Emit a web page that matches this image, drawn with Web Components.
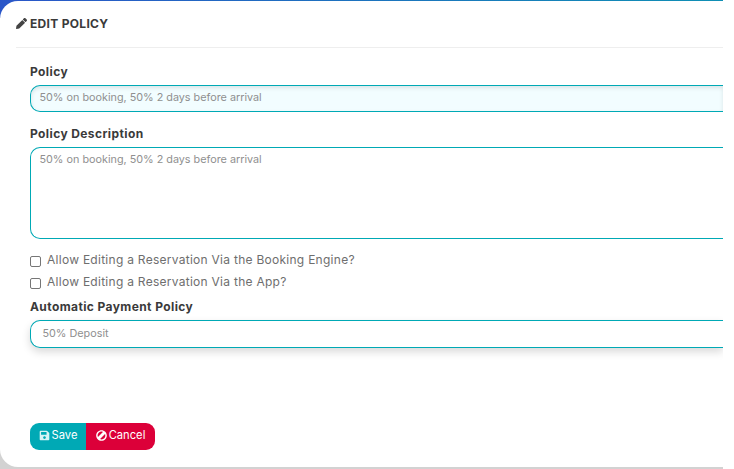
<!DOCTYPE html>
<html>
<head>
<meta charset="utf-8">
<title>Edit Policy</title>
<style>
    html, body { margin: 0; padding: 0; background: #fff; }
    body { font-family: "Inter", "Open Sans", sans-serif; width: 734px; height: 469px; overflow: hidden; }
</style>
</head>
<body>
<policy-card>
    <policy-field label="Policy" value="50% on booking, 50% 2 days before arrival" variant="tinted"></policy-field>
    <policy-field label="Policy Description" value="50% on booking, 50% 2 days before arrival" variant="area"></policy-field>
    <policy-check>Allow Editing a Reservation Via the Booking Engine?</policy-check>
    <policy-check>Allow Editing a Reservation Via the App?</policy-check>
    <policy-field label="Automatic Payment Policy" value="50% Deposit" variant="select"></policy-field>
    <policy-actions slot="actions"></policy-actions>
</policy-card>

<script>
(function() {
    class PolicyCard extends HTMLElement {
        constructor() {
            super();
            this.attachShadow({ mode: 'open' }).innerHTML = `
                <style>
                    :host {
                        display: block;
                        box-sizing: border-box;
                        width: 723px;
                        height: 469px;
                        padding: 1px 0 2px;
                        overflow: hidden;
                        background:
                            linear-gradient(#d2d2d2, #d2d2d2) bottom / 100% 20px no-repeat,
                            linear-gradient(90deg, #2a56c8, #0f8fb4) top / 100% 18px no-repeat;
                    }
                    .sheet {
                        height: 100%;
                        background: #fff;
                        border-radius: 18px 0 0 18px;
                    }
                    .head {
                        margin-left: 16px;
                        height: 47px;
                        box-sizing: border-box;
                        border-bottom: 1px solid #eee;
                        display: flex;
                        align-items: center;
                        gap: 3px;
                        padding-bottom: 1px;
                        font-size: 12px;
                        font-weight: 700;
                        color: #3a3a3a;
                        letter-spacing: 0.3px;
                    }
                    .head svg { width: 11px; height: 11px; fill: #444; }
                    .body { padding: 16px 0 0 30px; display: flex; flex-direction: column; }
                </style>
                <div class="sheet">
                    <div class="head">
                        <svg viewBox="0 0 512 512"><path d="M497.900 142.100l-46.100 46.100c-4.700 4.700-12.300 4.700-17 0l-111-111c-4.700-4.700-4.700-12.300 0-17l46.100-46.100c18.700-18.700 49.100-18.700 67.900 0l60.100 60.100c18.800 18.700 18.800 49.100 0 67.900zM284.200 99.800L21.600 362.400.4 483.900c-2.900 16.400 11.400 30.600 27.800 27.800l121.500-21.300 262.600-262.600c4.700-4.700 4.700-12.300 0-17l-111-111c-4.800-4.700-12.400-4.700-17.100 0z"/></svg>
                        <span>EDIT POLICY</span>
                    </div>
                    <div class="body"><slot></slot></div>
                    <slot name="actions"></slot>
                </div>
            `;
        }
    }

    class PolicyField extends HTMLElement {
        constructor() {
            super();
            this.attachShadow({ mode: 'open' });
        }

        connectedCallback() {
            const variant = this.getAttribute('variant');
            this.shadowRoot.innerHTML = `
                <style>
                    :host { display: block; margin-bottom: 14px; }
                    :host([variant="area"]) { margin-bottom: 10px; }
                    label {
                        display: block;
                        font-size: 12px;
                        font-weight: 700;
                        color: #3a3a3a;
                        line-height: 16px;
                        margin-bottom: 5px;
                        letter-spacing: 0.4px;
                    }
                    .box {
                        box-sizing: border-box;
                        height: 27px;
                        border: 1.5px solid #00a9b5;
                        border-right: 0;
                        border-radius: 10px 0 0 10px;
                        padding: 4px 8.5px;
                        font-size: 10.8px;
                        line-height: 15px;
                        color: #8f8f8f;
                        background: #fff;
                    }
                    .tinted { background: #f2fdff; box-shadow: inset 0 2px 4px rgba(0,0,0,0.1); }
                    .area { height: 92px; }
                    .select { padding-left: 11.5px; height: 28px; padding-top: 5px; box-shadow: 0 4px 8px rgba(0,0,0,0.15); }
                </style>
                <label>${this.getAttribute('label')}</label>
                <div class="box ${variant}">${this.getAttribute('value')}</div>
            `;
        }
    }

    class PolicyCheck extends HTMLElement {
        constructor() {
            super();
            this.attachShadow({ mode: 'open' }).innerHTML = `
                <style>
                    :host {
                        display: flex;
                        align-items: center;
                        gap: 6px;
                        height: 22px;
                        font-size: 12px;
                        color: #6e6e6e;
                        letter-spacing: 0.27px;
                    }
                    span { padding-bottom: 2px; }
                    i {
                        box-sizing: border-box;
                        width: 11px;
                        height: 11px;
                        border: 1px solid #767676;
                        border-radius: 2px;
                        background: #fff;
                        margin-top: 3px;
                    }
                    :host(:last-of-type) { margin-bottom: 6px; }
                </style>
                <i></i><span><slot></slot></span>
            `;
        }
    }

    class PolicyActions extends HTMLElement {
        constructor() {
            super();
            this.attachShadow({ mode: 'open' }).innerHTML = `
                <style>
                    :host { display: flex; margin: 61px 0 0 30px; width: max-content; }
                    div {
                        display: flex;
                        align-items: center;
                        justify-content: center;
                        gap: 2px;
                        height: 27px;
                        font-size: 11.2px;
                        color: #fff;
                    }
                    span { padding-bottom: 3px; }
                    svg { width: 11px; height: 11px; fill: #fff; margin-bottom: 2px; }
                    .save { width: 56px; background: #00a9b5; border-radius: 9px 0 0 9px; }
                    .save svg { fill: #d8f3f5; }
                    .cancel { width: 69px; background: #dc0039; border-radius: 0 9px 9px 0; }
                    .cancel svg { transform: scaleX(-1); }
                </style>
                <div class="save">
                    <svg viewBox="0 0 448 512"><path fill-rule="evenodd" d="M433.900 129.900l-83.900-83.900A48 48 0 0 0 316.100 32H48C21.500 32 0 53.500 0 80v352c0 26.500 21.500 48 48 48h352c26.500 0 48-21.500 48-48V163.900a48 48 0 0 0-14.100-34zM224 416c-35.300 0-64-28.700-64-64s28.700-64 64-64 64 28.700 64 64-28.700 64-64 64zM320 212c0 6.600-5.400 12-12 12H76c-6.600 0-12-5.400-12-12V108c0-6.600 5.400-12 12-12h232c6.600 0 12 5.400 12 12z"/></svg>
                    <span>Save</span>
                </div>
                <div class="cancel">
                    <svg viewBox="0 0 512 512"><path fill-rule="evenodd" d="M256 8C119 8 8 119 8 256s111 248 248 248 248-111 248-248S393 8 256 8zm130 118c53 53 65 132 34 196L190 92c64-31 143-19 196 34zM126 386c-53-53-65-132-34-196l230 230c-64 31-143 19-196-34z"/></svg>
                    <span>Cancel</span>
                </div>
            `;
        }
    }

    customElements.define('policy-card', PolicyCard);
    customElements.define('policy-field', PolicyField);
    customElements.define('policy-check', PolicyCheck);
    customElements.define('policy-actions', PolicyActions);
})();
</script>
</body>
</html>
